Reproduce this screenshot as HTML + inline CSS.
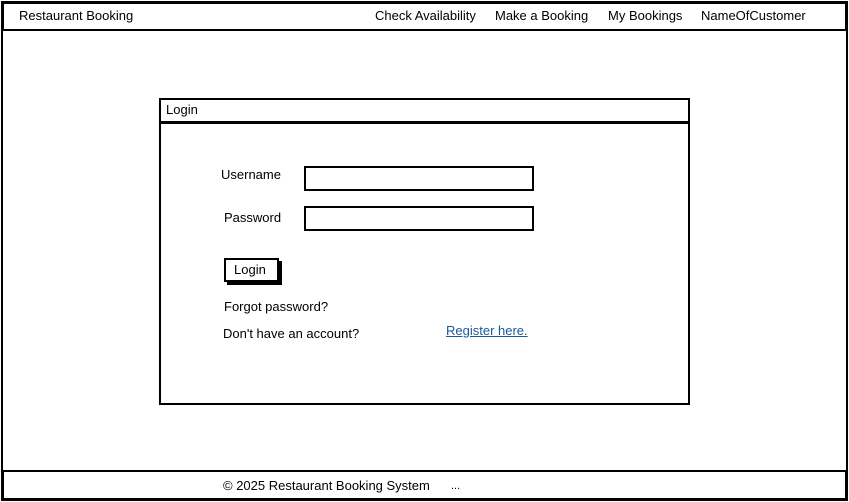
<!DOCTYPE html>
<html><head><meta charset="utf-8"><style>
*{margin:0;padding:0;box-sizing:border-box}
body{width:849px;height:502px;background:#fff;position:relative;overflow:hidden;font-family:"Liberation Sans",sans-serif;font-size:13px;color:#000}
.b{position:absolute;border:2px solid #000;background:#fff}
.t{position:absolute;white-space:nowrap;line-height:16px}
</style></head><body>
<div class="b" style="left:1px;top:1px;width:847px;height:500px;border-width:2px"></div>
<div class="b" style="left:2px;top:2px;width:845px;height:29px"></div>
<div class="t" style="left:19px;top:8px">Restaurant Booking</div>
<div class="t" style="left:375px;top:8px">Check Availability</div>
<div class="t" style="left:495px;top:8px">Make a Booking</div>
<div class="t" style="left:608px;top:8px">My Bookings</div>
<div class="t" style="left:701px;top:8px">NameOfCustomer</div>

<div class="b" style="left:159px;top:122px;width:531px;height:283px"></div>
<div class="b" style="left:159px;top:98px;width:531px;height:25px"></div>
<div class="t" style="left:166px;top:102px">Login</div>

<div class="t" style="left:221px;top:167px">Username</div>
<div class="b" style="left:304px;top:166px;width:230px;height:25px"></div>
<div class="t" style="left:224px;top:210px">Password</div>
<div class="b" style="left:304px;top:206px;width:230px;height:25px"></div>

<div class="b" style="left:224px;top:258px;width:55px;height:24px;box-shadow:3px 3px 0 #000"></div>
<div class="t" style="left:234px;top:262px">Login</div>

<div class="t" style="left:224px;top:299px">Forgot password?</div>
<div class="t" style="left:223px;top:326px">Don't have an account?</div>
<div class="t" style="left:446px;top:323px;color:#1a5a9a;text-decoration:underline">Register here.</div>

<div class="b" style="left:2px;top:470px;width:845px;height:30px"></div>
<div class="t" style="left:223px;top:478px">© 2025 Restaurant Booking System</div>
<div class="t" style="left:451px;top:478px;font-size:11px">...</div>
</body></html>
